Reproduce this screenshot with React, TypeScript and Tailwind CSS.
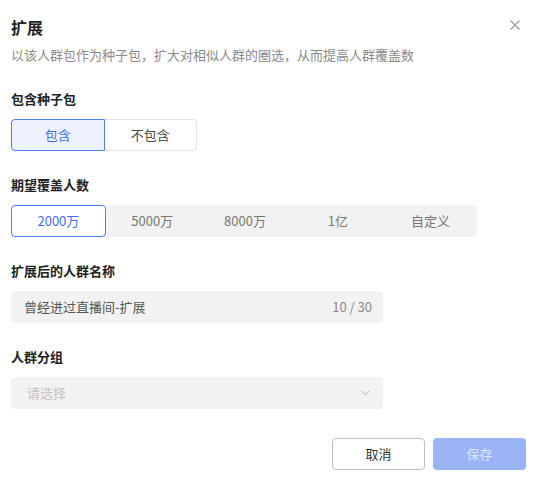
const font = { fontFamily: '"Noto Sans CJK SC", "Noto Sans", sans-serif' }

const coverOptions = ["2000万", "5000万", "8000万", "1亿", "自定义"]

export default function App() {
  return (
    <div className="w-[536px] h-[487px] bg-white relative" style={font}>
      {/* Header */}
      <div className="flex items-start justify-between pl-[11px] pr-[16px] pt-[15px]">
        <h1 className="text-[16px] leading-6 font-bold text-[#222]">扩展</h1>
        <button className="mt-[5px] text-[#9a9a9a]" aria-label="close">
          <svg width="10" height="10" viewBox="0 0 10 10" fill="none" stroke="currentColor" strokeWidth="1.3">
            <path d="M0.5 0.5 L9.5 9.5 M9.5 0.5 L0.5 9.5" />
          </svg>
        </button>
      </div>
      <div className="px-[11px]">
        <p className="mt-[6px] text-[13px] leading-5 text-[#8a8a8a]">
          以该人群包作为种子包，扩大对相似人群的圈选，从而提高人群覆盖数
        </p>

        {/* Seed package */}
        <div className="mt-6 text-[13px] leading-5 font-bold text-[#222]">包含种子包</div>
        <div className="mt-[10px] flex w-[186px] h-8">
          <button className="flex-1 rounded-l-[4px] border border-[#4f7ff2] bg-[#edf2fe] text-[13px] text-[#3d6ff0]">
            包含
          </button>
          <button className="flex-1 rounded-r-[4px] border border-l-0 border-[#e3e3e3] bg-white text-[13px] text-[#444]">
            不包含
          </button>
        </div>

        {/* Cover count */}
        <div className="mt-6 text-[13px] leading-5 font-bold text-[#222]">期望覆盖人数</div>
        <div className="mt-[10px] flex w-[466px] h-8 rounded-[4px] bg-[#f2f2f2]">
          {coverOptions.map((opt, i) => (
            <button
              key={opt}
              className={
                i === 0
                  ? "flex-1 rounded-[4px] border border-[#4f7ff2] bg-white text-[13px] text-[#3d6ff0]"
                  : "flex-1 text-[13px] text-[#777]"
              }
            >
              {opt}
            </button>
          ))}
        </div>

        {/* Name */}
        <div className="mt-6 text-[13px] leading-5 font-bold text-[#222]">扩展后的人群名称</div>
        <div className="mt-[10px] flex items-center justify-between w-[372px] h-8 rounded-[4px] bg-[#f2f2f2] pl-[13px] pr-[11px]">
          <span className="text-[13px] text-[#555]">曾经进过直播间-扩展</span>
          <span className="text-[13px] text-[#888]">10 / 30</span>
        </div>

        {/* Group */}
        <div className="mt-6 text-[13px] leading-5 font-bold text-[#222]">人群分组</div>
        <div className="mt-[10px] flex items-center justify-between w-[372px] h-8 rounded-[4px] bg-[#f2f2f2] pl-[16px] pr-[13px]">
          <span className="text-[13px] text-[#c2c2c2]">请选择</span>
          <svg width="9" height="6" viewBox="0 0 9 6" fill="none" stroke="#aaa" strokeWidth="1">
            <path d="M0.5 0.8 L4.5 4.8 L8.5 0.8" />
          </svg>
        </div>

        {/* Footer */}
        <div className="mt-[29px] flex justify-end gap-2 pr-[-1px] mr-[-1px]">
          <button className="w-[93px] h-8 rounded-[4px] border border-[#bdbdbd] bg-white text-[13px] text-[#333]">
            取消
          </button>
          <button className="w-[93px] h-8 rounded-[4px] bg-[#99b3f5] text-[13px] text-[#dbe5fd]">
            保存
          </button>
        </div>
      </div>
    </div>
  )
}
